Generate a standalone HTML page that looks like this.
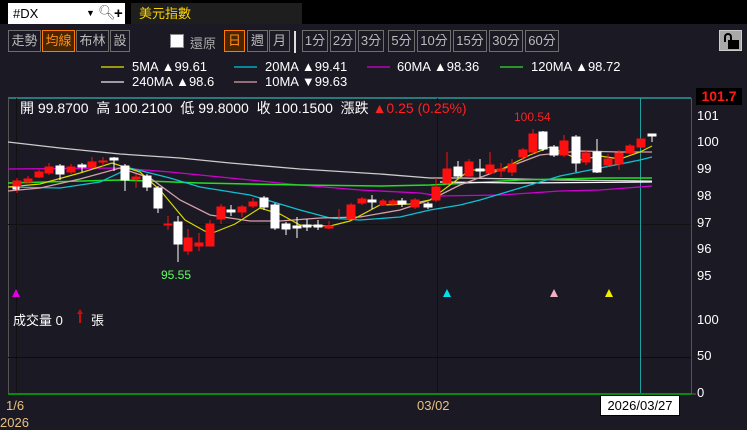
<!DOCTYPE html>
<html><head><meta charset="utf-8"><style>
*{margin:0;padding:0;box-sizing:border-box}
body{width:747px;height:428px;background:#1a1924;position:relative;overflow:hidden;font-family:"Liberation Sans","Noto Sans CJK TC",sans-serif;color:#fff}
.a{position:absolute;white-space:nowrap}
.btn{position:absolute;top:30px;height:22px;border:1px solid #6e6e6e;color:#bbb;font-size:13px;line-height:20px;text-align:center}
.on{border-color:#ff7a00;background:#4a2600;color:#ff8c1a}
.leg{font-size:13px;color:#fff}
</style></head><body>
<div class="a" style="left:0;top:0;width:747px;height:24px;background:#000"></div>
<div class="a" style="left:8px;top:3px;width:117px;height:21px;background:#fff;color:#000;font-size:13px;line-height:21px;padding-left:5px">#DX<span style="position:absolute;left:78px;font-size:9px">▼</span><span style="position:absolute;left:90px;top:-1px;font-size:14px;color:#666">&#x1F50D;&#xFE0E;</span><span style="position:absolute;left:106px;font-weight:bold;font-size:15px">+</span></div>
<div class="a" style="left:131px;top:3px;width:171px;height:21px;background:#1e1e1e;color:#ffd700;font-size:13px;line-height:21px;padding-left:8px">美元指數</div>

<div class="btn" style="left:8px;width:33px">走勢</div>
<div class="btn on" style="left:42px;width:33px">均線</div>
<div class="btn" style="left:76px;width:33px">布林</div>
<div class="btn" style="left:110px;width:20px">設</div>
<div class="a" style="left:170px;top:34px;width:14px;height:14px;background:#fff;border:1px solid #888"></div>
<div class="a" style="left:190px;top:33px;color:#aaa;font-size:13px">還原</div>
<div class="btn on" style="left:224px;width:21px">日</div>
<div class="btn" style="left:247px;width:21px">週</div>
<div class="btn" style="left:269px;width:21px">月</div>
<div class="a" style="left:294px;top:31px;width:2px;height:22px;background:#ddd"></div>
<div class="btn" style="left:302px;width:26px">1分</div>
<div class="btn" style="left:330px;width:26px">2分</div>
<div class="btn" style="left:358px;width:26px">3分</div>
<div class="btn" style="left:388px;width:27px">5分</div>
<div class="btn" style="left:417px;width:34px">10分</div>
<div class="btn" style="left:453px;width:34px">15分</div>
<div class="btn" style="left:489px;width:34px">30分</div>
<div class="btn" style="left:525px;width:34px">60分</div>
<div class="a" style="left:719px;top:30px;width:23px;height:21px;background:#a8a8a8;border:1px solid #ccc">
  <div class="a" style="left:4px;top:2px;width:8px;height:9px;border:2px solid #000;border-bottom:none;border-radius:4px 4px 0 0"></div>
  <div class="a" style="left:8px;top:9px;width:11px;height:9px;background:#000"></div>
</div>

<svg class="a" style="left:0;top:0" width="747" height="428">
<g stroke-width="1.3">
<line x1="101" y1="67" x2="124" y2="67" stroke="#e6e600"/>
<line x1="234" y1="67" x2="257" y2="67" stroke="#00c8d8"/>
<line x1="367" y1="67" x2="390" y2="67" stroke="#d000d0"/>
<line x1="500" y1="67" x2="523" y2="67" stroke="#30e030"/>
<line x1="101" y1="82" x2="124" y2="82" stroke="#eee"/>
<line x1="234" y1="82" x2="257" y2="82" stroke="#e0a0a8"/>
</g>
</svg>
<div class="a leg" style="left:132px;top:59px">5MA ▲99.61</div>
<div class="a leg" style="left:265px;top:59px">20MA ▲99.41</div>
<div class="a leg" style="left:397px;top:59px">60MA ▲98.36</div>
<div class="a leg" style="left:531px;top:59px">120MA ▲98.72</div>
<div class="a leg" style="left:132px;top:74px">240MA ▲98.6</div>
<div class="a leg" style="left:265px;top:74px">10MA ▼99.63</div>

<svg class="a" style="left:0;top:0" width="747" height="428">
<line x1="8" y1="98" x2="691" y2="98" stroke="#2a9a9a" stroke-width="1.5"/>
<line x1="8.5" y1="98" x2="8.5" y2="394" stroke="#555"/>
<line x1="16.5" y1="98" x2="16.5" y2="394" stroke="#111"/>
<line x1="437.5" y1="98" x2="437.5" y2="394" stroke="#111"/>
<line x1="8" y1="224.5" x2="691" y2="224.5" stroke="#111"/>
<line x1="8" y1="357.5" x2="691" y2="357.5" stroke="#0c0c0c"/>
<line x1="691.5" y1="98" x2="691.5" y2="394" stroke="#555"/>
<line x1="640.5" y1="98" x2="640.5" y2="394" stroke="#1fa0a0"/>
<line x1="8" y1="394" x2="691" y2="394" stroke="#0a8a0a" stroke-width="2"/>
<line x1="691" y1="394" x2="696" y2="394" stroke="#666"/>
<polyline fill="none" stroke="#ccc" stroke-width="1.3" points="8,142 60,148 120,154 180,158 230,163 300,169 380,174 430,178 460,178 520,179 560,180 652,181"/>
<polyline fill="none" stroke="#d000d0" stroke-width="1.3" points="8,169 120,168 170,172 230,178 300,185 360,190 420,193 440,196 500,195 560,191 600,190 652,186"/>
<polyline fill="none" stroke="#20e020" stroke-width="1.5" points="8,183 120,180 200,183 300,185 380,186 430,185 470,183 520,180 600,178 652,178"/>
<polyline fill="none" stroke="#ffffff" stroke-width="1.2" points="440,182 520,183 652,182"/>
<polyline fill="none" stroke="#10c0d0" stroke-width="1.3" points="8,187 60,188 100,182 130,168 170,178 200,187 250,195 300,210 330,218 360,220 400,217 430,210 460,205 480,200 520,188 560,176 600,168 640,160 652,157"/>
<polyline fill="none" stroke="#d8a0a8" stroke-width="1.3" points="8,191 40,188 80,179 120,168 150,178 180,200 210,215 250,221 280,221 320,218 360,217 400,210 430,200 460,185 500,170 540,155 580,151 620,152 652,152"/>
<polyline fill="none" stroke="#d8d800" stroke-width="1.2" points="8,187 40,184 80,173 112,163 140,172 160,190 185,220 210,234 235,224 260,208 280,214 300,225 330,226 350,221 380,205 410,204 430,200 450,185 470,170 500,170 530,155 550,147 580,160 600,156 620,159 640,152 652,146"/>
<g stroke-width="1">
<g stroke="#fff" fill="#fff">
<line x1="16" y1="183" x2="16" y2="190"/><rect x="13" y="184" width="6" height="5"/>
<line x1="60" y1="164" x2="60" y2="180"/><rect x="56" y="166" width="8" height="8"/>
<line x1="82" y1="163" x2="82" y2="172"/><rect x="78" y="165" width="8" height="2"/>
<line x1="114" y1="157" x2="114" y2="171"/><rect x="110" y="158" width="8" height="2"/>
<line x1="125" y1="164" x2="125" y2="191"/><rect x="121" y="166" width="8" height="14"/>
<line x1="147" y1="174" x2="147" y2="191"/><rect x="143" y="176" width="8" height="11"/>
<line x1="158" y1="186" x2="158" y2="213"/><rect x="154" y="188" width="8" height="20"/>
<line x1="178" y1="216" x2="178" y2="262"/><rect x="174" y="222" width="8" height="22"/>
<line x1="231" y1="205" x2="231" y2="216"/><rect x="227" y="210" width="8" height="2"/>
<line x1="264" y1="196" x2="264" y2="210"/><rect x="260" y="198" width="8" height="9"/>
<line x1="275" y1="203" x2="275" y2="230"/><rect x="271" y="205" width="8" height="23"/>
<line x1="286" y1="222" x2="286" y2="235"/><rect x="282" y="224" width="8" height="5"/>
<line x1="297" y1="217" x2="297" y2="238"/><rect x="293" y="226" width="8" height="2"/>
<line x1="307" y1="219" x2="307" y2="231"/><rect x="303" y="225" width="8" height="2"/>
<line x1="318" y1="220" x2="318" y2="230"/><rect x="314" y="225" width="8" height="2"/>
<line x1="372" y1="195" x2="372" y2="209"/><rect x="368" y="200" width="8" height="2"/>
<line x1="402" y1="198" x2="402" y2="207"/><rect x="398" y="201" width="8" height="3"/>
<line x1="428" y1="202" x2="428" y2="209"/><rect x="424" y="204" width="8" height="3"/>
<line x1="458" y1="161" x2="458" y2="178"/><rect x="454" y="167" width="8" height="9"/>
<line x1="480" y1="159" x2="480" y2="177"/><rect x="476" y="169" width="8" height="2"/>
<line x1="543" y1="131" x2="543" y2="151"/><rect x="539" y="132" width="8" height="17"/>
<line x1="554" y1="145" x2="554" y2="157"/><rect x="550" y="147" width="8" height="8"/>
<line x1="576" y1="135" x2="576" y2="172"/><rect x="572" y="137" width="8" height="26"/>
<line x1="597" y1="139" x2="597" y2="173"/><rect x="593" y="152" width="8" height="20"/>
<line x1="652" y1="135" x2="652" y2="142"/><rect x="648" y="134" width="8" height="2"/>
</g>
<g stroke="#ff1010" fill="#ff1010">
<line x1="17" y1="178" x2="17" y2="193"/><rect x="13" y="181" width="8" height="5"/>
<line x1="28" y1="176" x2="28" y2="183"/><rect x="24" y="179" width="8" height="3"/>
<line x1="39" y1="170" x2="39" y2="178"/><rect x="35" y="172" width="8" height="5"/>
<line x1="49" y1="163" x2="49" y2="175"/><rect x="45" y="167" width="8" height="6"/>
<line x1="71" y1="164" x2="71" y2="174"/><rect x="67" y="167" width="8" height="5"/>
<line x1="92" y1="157" x2="92" y2="168"/><rect x="88" y="162" width="8" height="5"/>
<line x1="103" y1="157" x2="103" y2="166"/><rect x="99" y="161" width="8" height="1"/>
<line x1="136" y1="174" x2="136" y2="188"/><rect x="132" y="177" width="8" height="2"/>
<line x1="168" y1="216" x2="168" y2="230"/><rect x="164" y="224" width="8" height="1"/>
<line x1="188" y1="229" x2="188" y2="255"/><rect x="184" y="238" width="8" height="13"/>
<line x1="199" y1="233" x2="199" y2="251"/><rect x="195" y="243" width="8" height="3"/>
<line x1="210" y1="220" x2="210" y2="246"/><rect x="206" y="224" width="8" height="22"/>
<line x1="221" y1="204" x2="221" y2="224"/><rect x="217" y="207" width="8" height="12"/>
<line x1="242" y1="205" x2="242" y2="217"/><rect x="238" y="207" width="8" height="5"/>
<line x1="253" y1="198" x2="253" y2="208"/><rect x="249" y="202" width="8" height="4"/>
<line x1="329" y1="221" x2="329" y2="229"/><rect x="325" y="226" width="8" height="2"/>
<line x1="339" y1="209" x2="339" y2="220"/>
<line x1="351" y1="203" x2="351" y2="219"/><rect x="347" y="205" width="8" height="14"/>
<line x1="362" y1="197" x2="362" y2="205"/><rect x="358" y="199" width="8" height="4"/>
<line x1="383" y1="199" x2="383" y2="206"/><rect x="380" y="201" width="6" height="4"/>
<line x1="393" y1="199" x2="393" y2="206"/><rect x="389" y="201" width="8" height="3"/>
<line x1="415" y1="198" x2="415" y2="209"/><rect x="411" y="200" width="8" height="7"/>
<line x1="436" y1="178" x2="436" y2="202"/><rect x="432" y="187" width="8" height="13"/>
<line x1="447" y1="152" x2="447" y2="185"/><rect x="443" y="169" width="8" height="14"/>
<line x1="469" y1="159" x2="469" y2="178"/><rect x="465" y="162" width="8" height="14"/>
<line x1="490" y1="152" x2="490" y2="175"/><rect x="486" y="165" width="8" height="8"/>
<line x1="501" y1="163" x2="501" y2="177"/><rect x="497" y="169" width="8" height="2"/>
<line x1="512" y1="159" x2="512" y2="176"/><rect x="508" y="164" width="8" height="8"/>
<line x1="523" y1="148" x2="523" y2="160"/><rect x="519" y="150" width="8" height="7"/>
<line x1="533" y1="129" x2="533" y2="154"/><rect x="529" y="134" width="8" height="18"/>
<line x1="564" y1="135" x2="564" y2="157"/><rect x="560" y="141" width="8" height="14"/>
<line x1="586" y1="150" x2="586" y2="165"/><rect x="582" y="153" width="8" height="9"/>
<line x1="608" y1="154" x2="608" y2="167"/><rect x="604" y="159" width="8" height="6"/>
<line x1="619" y1="150" x2="619" y2="170"/><rect x="615" y="153" width="8" height="11"/>
<line x1="630" y1="144" x2="630" y2="155"/><rect x="626" y="146" width="8" height="7"/>
<line x1="641" y1="139" x2="641" y2="148"/><rect x="637" y="139" width="8" height="8"/>
</g>
</g>
<polygon points="12,297 16,289 20,297" fill="#e000e0"/>
<polygon points="443,297 447,289 451,297" fill="#00e0f0"/>
<polygon points="550,297 554,289 558,297" fill="#f4b0c0"/>
<polygon points="605,297 609,289 613,297" fill="#f0f000"/>
<line x1="80" y1="312" x2="80" y2="323" stroke="#c01010" stroke-width="2"/>
<polygon points="77,314 80,309 83,314" fill="#c01010"/>
</svg>

<div class="a" style="left:20px;top:98px;font-size:14px">開 99.8700&nbsp; 高 100.2100&nbsp; 低 99.8000&nbsp; 收 100.1500&nbsp; 漲跌 <span style="color:#ff2020">▲0.25 (0.25%)</span></div>
<div class="a" style="left:514px;top:110px;color:#ff2020;font-size:12px">100.54</div>
<div class="a" style="left:161px;top:268px;color:#60ff60;font-size:12px">95.55</div>
<div class="a" style="left:13px;top:310px;font-size:13px">成交量 0</div>
<div class="a" style="left:91px;top:310px;font-size:13px">張</div>

<div class="a" style="left:696px;top:88px;width:46px;height:17px;background:#000;color:#ff1a1a;font-weight:bold;font-size:14px;line-height:17px;text-align:center">101.7</div>
<div class="a" style="left:697px;top:108px;font-size:13px">101</div>
<div class="a" style="left:697px;top:134px;font-size:13px">100</div>
<div class="a" style="left:697px;top:161px;font-size:13px">99</div>
<div class="a" style="left:697px;top:188px;font-size:13px">98</div>
<div class="a" style="left:697px;top:215px;font-size:13px">97</div>
<div class="a" style="left:697px;top:241px;font-size:13px">96</div>
<div class="a" style="left:697px;top:268px;font-size:13px">95</div>
<div class="a" style="left:697px;top:312px;font-size:13px">100</div>
<div class="a" style="left:697px;top:348px;font-size:13px">50</div>
<div class="a" style="left:697px;top:385px;font-size:13px">0</div>

<div class="a" style="left:6px;top:398px;color:#e8c080;font-size:13px">1/6</div>
<div class="a" style="left:0px;top:415px;color:#e8c080;font-size:13px">2026</div>
<div class="a" style="left:417px;top:398px;color:#e8c080;font-size:13px">03/02</div>
<div class="a" style="left:600px;top:395px;width:80px;height:21px;background:#fff;border:1px solid #000;color:#000;font-size:13px;line-height:19px;text-align:center">2026/03/27</div>
</body></html>
